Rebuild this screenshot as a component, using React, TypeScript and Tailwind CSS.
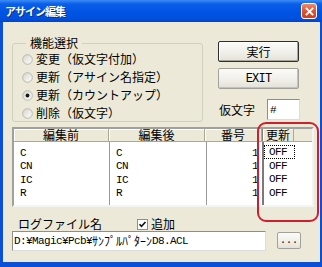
import React from 'react';

const jp = "font-['Noto_Sans_CJK_JP',sans-serif]";
const mono = "font-['Liberation_Mono','Noto_Sans_CJK_JP',monospace]";

const rows = [
  {before: 'C', after: 'C', no: '1', upd: 'OFF'},
  {before: 'CN', after: 'CN', no: '1', upd: 'OFF'},
  {before: 'IC', after: 'IC', no: '1', upd: 'OFF'},
  {before: 'R', after: 'R', no: '1', upd: 'OFF'}
];

function Radio({checked}: {checked?: boolean}) {
  return (
    <svg width="11" height="11" viewBox="0 0 11 11" className="shrink-0">
      <defs>
        <linearGradient id="rg" x1="0" y1="0" x2="1" y2="1">
          <stop offset="0" stopColor="#d6d4cb" />
          <stop offset="1" stopColor="#ffffff" />
        </linearGradient>
      </defs>
      <circle cx="5.5" cy="5.5" r="4.8" fill="url(#rg)" stroke="#b9b7ae" strokeWidth="1" />
      {checked && <circle cx="5.5" cy="5.5" r="1.9" fill="#1a1a1a" />}
    </svg>
  );
}

function RadioRow({label, checked}: {label: string; checked?: boolean}) {
  return (
    <div className="flex h-[18px] items-center">
      <Radio checked={checked} />
      <span className={`ml-[3px] whitespace-nowrap text-[12px] leading-[14px] text-black ${jp}`}>{label}</span>
    </div>
  );
}

function HeaderCell({label, className}: {label: string; className: string}) {
  return (
    <div
      className={`flex h-full items-center justify-center border-r border-[#aca899] shadow-[inset_1px_1px_0_#ffffff] text-[12px] leading-[12px] ${jp} ${className}`}
    >
      {label}
    </div>
  );
}

export default function App() {
  return (
    <div className="relative h-[267px] w-[322px] overflow-hidden bg-[#0a4fd6]">
      {/* title bar */}
      <div className="flex h-[22px] items-center justify-between bg-[linear-gradient(180deg,#3b8cf6_0%,#0a5ee9_18%,#0054e3_55%,#0150dc_85%,#0042cf_100%)] pl-[5px] pr-[5px]">
        <span
          className={`text-[11px] font-bold leading-[12px] tracking-[-1px] text-white [text-shadow:1px_1px_0_#0a2f8a] ${jp}`}
        >
          アサイン編集
        </span>
        <div className="flex h-[16px] w-[16px] items-center justify-center rounded-[3px] border border-white bg-[linear-gradient(180deg,#ee8a6a_0%,#e0583a_45%,#c8401f_100%)]">
          <svg width="9" height="9" viewBox="0 0 9 9">
            <path d="M1.5 1.5 L7.5 7.5 M7.5 1.5 L1.5 7.5" stroke="#ffffff" strokeWidth="1.8" strokeLinecap="square" />
          </svg>
        </div>
      </div>

      {/* dialog body */}
      <div className="ml-[3px] mr-[2px] h-[240px] bg-[#ece9d8] pl-[9px] pt-[14px] text-black">
        <div className="flex h-[86px] items-start">
          <fieldset className="h-[86px] w-[191px] shrink-0 rounded-[3px] border border-[#d0d0bf] pl-[9px]">
            <legend className={`ml-[4px] px-[4px] text-[12px] leading-[14px] ${jp}`}>機能選択</legend>
            <RadioRow label="変更（仮文字付加）" />
            <RadioRow label="更新（アサイン名指定）" />
            <RadioRow label="更新（カウントアップ）" checked />
            <RadioRow label="削除（仮文字）" />
          </fieldset>

          <div className="ml-[15px] mt-[5px] flex w-[82px] shrink-0 flex-col">
            <button
              className={`flex h-[21px] w-[81px] items-center justify-center rounded-[2px] border border-[#2f2f2f] bg-[linear-gradient(180deg,#fbfbf9_0%,#efeee8_60%,#e3e1d8_100%)] shadow-[inset_-1px_-1px_0_#a9a79c,inset_1px_1px_0_#ffffff] text-[12px] leading-[14px] ${jp}`}
            >
              実行
            </button>
            <button
              className={`mt-[6px] flex h-[21px] w-[81px] items-center justify-center rounded-[2px] border border-[#a3a29a] bg-[linear-gradient(180deg,#fbfbf9_0%,#efeee8_60%,#e3e1d8_100%)] shadow-[inset_-1px_-1px_0_#c4c2b8] text-[12px] leading-[14px] tracking-[-0.8px] ${mono}`}
            >
              EXIT
            </button>
            <div className="mt-[10px] flex items-center whitespace-nowrap">
              <span className={`ml-[1px] shrink-0 text-[12px] leading-[14px] ${jp}`}>仮文字</span>
              <div
                className={`ml-[12px] flex h-[21px] w-[33px] shrink-0 items-center border border-[#8e8e8e] border-r-[#dcdcdc] border-b-[#dcdcdc] bg-white pl-[2px] text-[11px] leading-[12px] ${mono}`}
              >
                #
              </div>
            </div>
          </div>
        </div>

        {/* list view */}
        <div className="mt-[5px] flex h-[80px] w-[302px] flex-col border-2 border-[#a0a0a0] border-r-[#f4f4f0] border-b-[#f4f4f0] bg-white">
          <div className="flex h-[13px] shrink-0 border-b border-[#aca899] bg-[#ece9d8]">
            <HeaderCell label="編集前" className="w-[95px]" />
            <HeaderCell label="編集後" className="w-[96px]" />
            <HeaderCell label="番号" className="w-[57px]" />
            <HeaderCell label="更新" className="w-[32px] border-l border-l-[#808080]" />
          </div>
          <div className={`flex flex-1 text-[11px] leading-[12px] tracking-[-0.6px] ${mono}`}>
            <div className="w-[96px] border-r border-[#9a9a9a] pt-[4px]">
              {rows.map((r) => (
                <div key={r.before} className="flex h-[13.5px] items-center pl-[6px]">
                  {r.before}
                </div>
              ))}
            </div>
            <div className="w-[97px] border-r border-[#9a9a9a] pt-[4px]">
              {rows.map((r) => (
                <div key={r.after} className="flex h-[13.5px] items-center pl-[6px]">
                  {r.after}
                </div>
              ))}
            </div>
            <div className="w-[57px] border-r-2 border-[#7a7a7a] pt-[4px]">
              {rows.map((r, i) => (
                <div key={i} className="flex h-[13.5px] items-center justify-end pr-[4px]">
                  {r.no}
                </div>
              ))}
            </div>
            <div className="flex-1 pt-[3px]">
              {rows.map((r, i) => (
                <div key={i} className="flex h-[13.5px] items-center">
                  <div
                    className={`flex h-full w-[31px] items-center pl-[4px] pt-[1px] ${i === 0 ? 'border border-dotted border-black' : 'border border-transparent'}`}
                  >
                    {r.upd}
                  </div>
                </div>
              ))}
            </div>
          </div>
        </div>

        {/* log file */}
        <div className="mt-[10px] flex h-[14px] items-center">
          <span className={`ml-[6px] text-[12px] leading-[14px] ${jp}`}>ログファイル名</span>
          <div className="ml-[35px] flex items-center">
            <div className="flex h-[11px] w-[11px] items-center justify-center border border-[#8e8e8e] bg-white">
              <svg width="9" height="9" viewBox="0 0 9 9">
                <path d="M1.5 4.2 L3.5 6.4 L7.5 2" stroke="#111111" strokeWidth="1.6" fill="none" />
              </svg>
            </div>
            <span className={`ml-[3px] text-[12px] leading-[14px] ${jp}`}>追加</span>
          </div>
        </div>
        <div className="flex items-start">
          <div
            className={`flex h-[20px] w-[254px] items-center border border-[#8e8e8e] border-r-[#dcdcdc] border-b-[#dcdcdc] bg-white pl-[1px] text-[11px] leading-[12px] tracking-[-0.6px] ${mono}`}
          >
            <span>D:¥Magic¥Pcb¥</span>
            <span className={`text-[12px] tracking-normal ${jp}`}>ｻﾝﾌﾟﾙﾊﾟﾀｰﾝ</span>
            <span>D8.ACL</span>
          </div>
          <button
            className={`ml-[11px] mt-[1px] flex h-[17px] w-[24px] items-center justify-center rounded-[2px] border border-[#a3a29a] bg-[linear-gradient(180deg,#fbfbf9_0%,#efeee8_60%,#e3e1d8_100%)] text-[10px] leading-[10px] ${mono}`}
          >
            ...
          </button>
        </div>
      </div>

      {/* red highlight annotation */}
      <div className="pointer-events-none absolute left-[257px] top-[122px] h-[100px] w-[62px] rounded-[9px] border-2 border-[#cf1f2e]" />
    </div>
  );
}
